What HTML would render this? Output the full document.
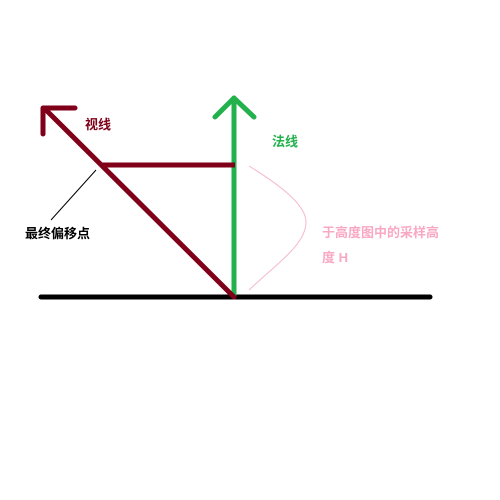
<!DOCTYPE html>
<html><head><meta charset="utf-8"><style>
html,body{margin:0;padding:0;background:#fff;width:500px;height:500px;overflow:hidden}
svg{display:block}
text{font-family:"Liberation Sans","Noto Sans CJK SC",sans-serif;font-weight:bold;font-size:13px}
</style></head><body>
<svg width="500" height="500" viewBox="0 0 500 500">
<line x1="41" y1="297" x2="430" y2="297" stroke="#000" stroke-width="5" stroke-linecap="round"/>
<line x1="234" y1="295" x2="234" y2="98" stroke="#22b14c" stroke-width="5" stroke-linecap="round"/>
<polyline points="215,117 234,98 254,117" fill="none" stroke="#22b14c" stroke-width="5" stroke-linecap="round" stroke-linejoin="round"/>
<line x1="234" y1="297" x2="44" y2="108" stroke="#7f0018" stroke-width="5" stroke-linecap="round"/>
<polyline points="75,108 43,108 43,134" fill="none" stroke="#7f0018" stroke-width="5" stroke-linecap="round" stroke-linejoin="round"/>
<line x1="101" y1="165" x2="235" y2="165" stroke="#7f0018" stroke-width="5"/>
<line x1="96" y1="170" x2="51" y2="220" stroke="#000" stroke-width="1"/>
<path d="M249,166 C280,185 306,205 306,222 C306,245 275,265 249,290" fill="none" stroke="#f5b8cb" stroke-width="1"/>
<text x="85" y="129" fill="#7f0018">视线</text>
<text x="272" y="146" fill="#22b14c">法线</text>
<text x="25" y="238" fill="#000">最终偏移点</text>
<text x="322" y="237" fill="#f9a8c4">于高度图中的采样高</text>
<text x="322" y="262" fill="#f9a8c4">度 H</text>
</svg>
</body></html>
